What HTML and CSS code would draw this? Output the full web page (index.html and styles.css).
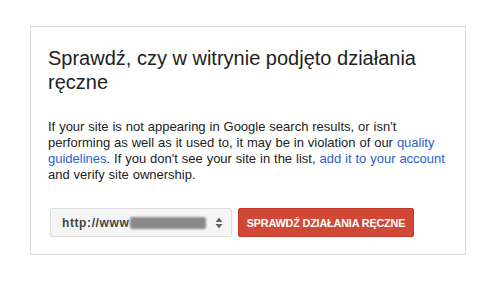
FILE: index.html
```html
<!DOCTYPE html>
<html lang="pl">
<head>
  <meta charset="UTF-8" />
  <title>Sprawdź działania ręczne</title>
  <link rel="stylesheet" href="styles.css">
</head>
<body>
  <div class="card">
    <h2>Sprawdź, czy w witrynie podjęto działania ręczne</h2>

    <p class="intro">
      If your site is not appearing in Google search results, or isn't performing as well as it used to, it may be in violation of our <a href="#">quality guidelines</a>. If you don't see your site in the list, <a href="#">add it to your account</a> and verify site ownership.
    </p>

    <div class="actions">
      <div class="site-select">
        <span class="site-url">http://www<span class="blur"></span></span>
        <svg class="arrows" width="8" height="12" viewBox="0 0 8 12">
          <path d="M4 0.5 L7.5 5 L0.5 5 Z" fill="#666"/>
          <path d="M4 11.5 L7.5 7 L0.5 7 Z" fill="#666"/>
        </svg>
      </div>
      <button class="check-btn">Sprawdź działania ręczne</button>
    </div>
  </div>
</body>
</html>
```

FILE: styles.css
```css
body {
  font-family: Arial, 'Liberation Sans', sans-serif;
  background: #fff;
  margin: 0;
  padding: 26px 0 0 30px;
}

.card {
  width: 400px;
  border: 1px solid #dcdcdc;
  padding: 19px 17px 17px 17px;
}

h2 {
  margin: 0;
  font-size: 20px;
  font-weight: normal;
  line-height: 24px;
  color: #222;
}

.intro {
  margin: 25px 0 0 0;
  font-size: 13px;
  line-height: 16px;
  color: #222;
  word-spacing: 0.3px;
}

.intro a {
  color: #2a5fcc;
  text-decoration: none;
}

.actions {
  display: flex;
  gap: 6px;
  margin: 25px 0 0 2px;
}

.site-select {
  box-sizing: border-box;
  width: 182px;
  height: 29px;
  background: #f5f5f5;
  border: 1px solid #dcdcdc;
  border-radius: 2px;
  display: flex;
  align-items: center;
  justify-content: space-between;
  padding: 0 8px 0 11px;
}

.site-url {
  font-size: 12px;
  font-weight: bold;
  letter-spacing: 0.6px;
  color: #444;
  display: flex;
  align-items: center;
}

.blur {
  display: inline-block;
  width: 76px;
  height: 12px;
  margin-left: 1px;
  background: #8a8a8a;
  border-radius: 2px;
  filter: blur(1.2px);
}

.arrows {
  display: block;
}

.check-btn {
  box-sizing: border-box;
  width: 176px;
  height: 29px;
  background: #d14836;
  border: 1px solid #c53727;
  border-radius: 2px;
  color: #fff;
  font-family: Arial, 'Liberation Sans', sans-serif;
  font-size: 10.8px;
  font-weight: bold;
  letter-spacing: -0.15px;
  text-transform: uppercase;
  padding: 0;
  cursor: pointer;
}
```
